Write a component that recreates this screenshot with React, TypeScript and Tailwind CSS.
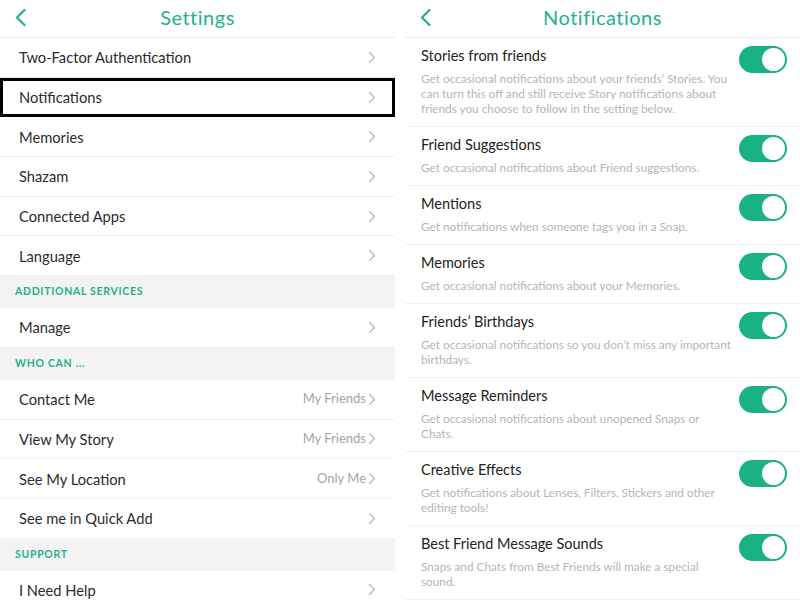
type Row =
  | { kind: "item"; label: string; value?: string; selected?: boolean }
  | { kind: "section"; label: string }

const SETTINGS: Row[] = [
  { kind: "item", label: "Two-Factor Authentication" },
  { kind: "item", label: "Notifications", selected: true },
  { kind: "item", label: "Memories" },
  { kind: "item", label: "Shazam" },
  { kind: "item", label: "Connected Apps" },
  { kind: "item", label: "Language" },
  { kind: "section", label: "ADDITIONAL SERVICES" },
  { kind: "item", label: "Manage" },
  { kind: "section", label: "WHO CAN ..." },
  { kind: "item", label: "Contact Me", value: "My Friends" },
  { kind: "item", label: "View My Story", value: "My Friends" },
  { kind: "item", label: "See My Location", value: "Only Me" },
  { kind: "item", label: "See me in Quick Add" },
  { kind: "section", label: "SUPPORT" },
  { kind: "item", label: "I Need Help" },
]

const NOTIFICATIONS = [
  {
    title: "Stories from friends",
    lines: [
      "Get occasional notifications about your friends’ Stories. You",
      "can turn this off and still receive Story notifications about",
      "friends you choose to follow in the setting below.",
    ],
  },
  { title: "Friend Suggestions", lines: ["Get occasional notifications about Friend suggestions."] },
  { title: "Mentions", lines: ["Get notifications when someone tags you in a Snap."] },
  { title: "Memories", lines: ["Get occasional notifications about your Memories."] },
  {
    title: "Friends’ Birthdays",
    lines: ["Get occasional notifications so you don’t miss any important", "birthdays."],
  },
  {
    title: "Message Reminders",
    lines: ["Get occasional notifications about unopened Snaps or", "Chats."],
  },
  {
    title: "Creative Effects",
    lines: ["Get notifications about Lenses, Filters, Stickers and other", "editing tools!"],
  },
  {
    title: "Best Friend Message Sounds",
    lines: ["Snaps and Chats from Best Friends will make a special", "sound."],
  },
]

function BackArrow() {
  return (
    <svg className="absolute left-[15px] top-[9px]" width="11" height="17" viewBox="0 0 11 17" fill="none">
      <polyline points="9.5,1 2,8.5 9.5,16" stroke="#1fb18c" strokeWidth="2.2" strokeLinecap="round" strokeLinejoin="round" />
    </svg>
  )
}

function Chevron() {
  return (
    <svg width="8" height="13" viewBox="0 0 8 13" fill="none" className="ml-[2px]">
      <polyline points="1.5,1.5 6.5,6.5 1.5,11.5" stroke="#b9b9b9" strokeWidth="1.3" strokeLinecap="round" strokeLinejoin="round" />
    </svg>
  )
}

function Header({ title }: { title: string }) {
  return (
    <div className="relative flex h-[38px] items-center justify-center border-b border-[#ececec] pb-[4px]">
      <BackArrow />
      <span className="text-[20px] tracking-[0.5px] text-[#1fb18c]">{title}</span>
    </div>
  )
}

function Toggle() {
  return (
    <div className="flex h-[27px] w-[48px] items-center justify-end rounded-full bg-[#18b285] px-[2px]">
      <div className="h-[23px] w-[23px] rounded-full bg-white" />
    </div>
  )
}

export default function App() {
  return (
    <div className="flex h-[600px] w-[800px] overflow-hidden bg-white font-['Lato',sans-serif] text-[#2b2b2b]">
      <div className="w-[395px] shrink-0">
        <Header title="Settings" />
        {SETTINGS.map((row) =>
          row.kind === "section" ? (
            <div
              key={row.label}
              className="flex h-[32px] items-center bg-[#f3f3f3] pl-[15px] text-[10.5px] font-bold tracking-[0.7px] text-[#1fb18c]"
            >
              {row.label}
            </div>
          ) : (
            <div
              key={row.label}
              className={
                row.selected
                  ? "flex h-[39.7px] items-center border-b border-[#f0f0f0] pl-[19px] pr-[19px] outline-[3px] -outline-offset-[3px] outline-black"
                  : "flex h-[39.7px] items-center border-b border-[#f0f0f0] pl-[19px] pr-[19px]"
              }
            >
              <span className="flex-1 text-[14.7px]">{row.label}</span>
              {row.value && <span className="text-[13px] text-[#a5a5a5]">{row.value}</span>}
              <Chevron />
            </div>
          )
        )}
      </div>

      <div className="ml-[10px] flex-1">
        <Header title="Notifications" />
        {NOTIFICATIONS.map((item) => (
          <div key={item.title} className="flex items-start border-b border-[#f0f0f0] pb-[10px] pl-[16px] pr-[13px] pt-[8px]">
            <div className="flex-1">
              <div className="text-[14.5px] leading-[20px] text-[#222]">{item.title}</div>
              <div className="mt-[5px] text-[11.8px] leading-[15px] text-[#b5b5b5]">
                {item.lines.map((line) => (
                  <div key={line} className="whitespace-nowrap">
                    {line}
                  </div>
                ))}
              </div>
            </div>
            <Toggle />
          </div>
        ))}
      </div>
    </div>
  )
}
